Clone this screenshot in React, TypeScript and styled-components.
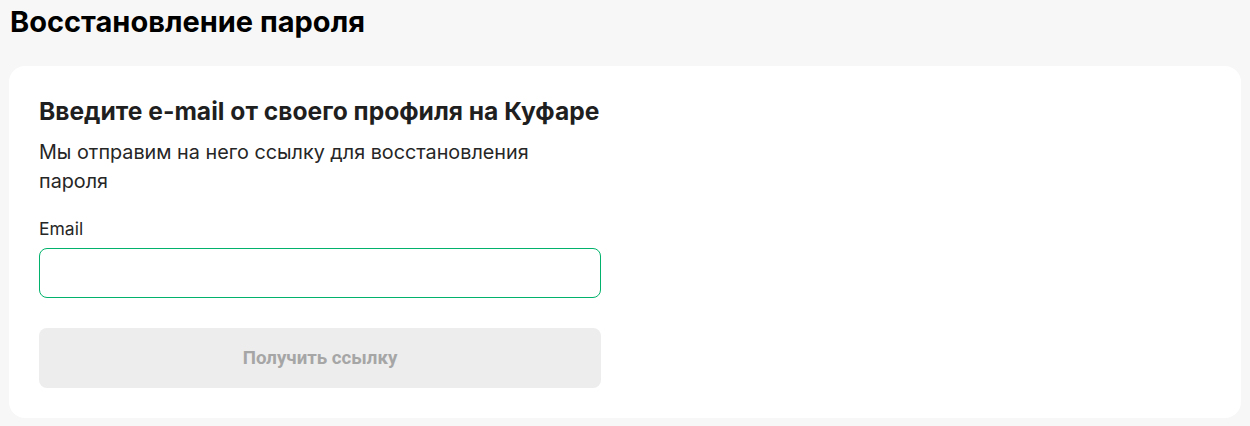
import styled, { createGlobalStyle } from "styled-components";

const GlobalStyle = createGlobalStyle`
  body {
    margin: 0;
    background: #f7f7f7;
    font-family: Inter, "Noto Sans", sans-serif;
    color: #1f1f1f;
  }
`;

const Page = styled.div`
  padding: 4px 9px 8px 9px;
`;

const PageTitle = styled.h1`
  margin: 0 0 0 1px;
  font-size: 29px;
  line-height: 36px;
  font-weight: 700;
  color: #000;
`;

const Card = styled.section`
  margin-top: 26px;
  background: #fff;
  border-radius: 16px;
  padding: 30px;
`;

const Form = styled.form`
  width: 562px;
  display: flex;
  flex-direction: column;
`;

const Heading = styled.h2`
  margin: 0;
  font-size: 24.6px;
  line-height: 30px;
  font-weight: 700;
  color: #1f1f1f;
`;

const Lead = styled.p`
  margin: 12px 0 0;
  width: 530px;
  font-size: 19.8px;
  line-height: 29px;
  color: #262626;
`;

const Label = styled.label`
  margin-top: 22px;
  font-size: 17.5px;
  line-height: 22px;
  color: #262626;
`;

const Input = styled.input`
  margin-top: 8px;
  box-sizing: border-box;
  height: 50px;
  width: 100%;
  border: 1px solid #00b26b;
  border-radius: 8px;
  padding: 0 16px;
  font-size: 16px;
  font-family: inherit;
  outline: none;
`;

const SubmitButton = styled.button`
  margin-top: 30px;
  height: 60px;
  width: 100%;
  border: 0;
  border-radius: 8px;
  background: #ededed;
  color: #a6a6a6;
  font-family: Roboto, "Liberation Sans", sans-serif;
  font-size: 18.7px;
  font-weight: 700;
  cursor: default;
`;

export default function App() {
  return (
    <>
      <GlobalStyle />
      <Page>
        <PageTitle>Восстановление пароля</PageTitle>
        <Card>
          <Form onSubmit={(e) => e.preventDefault()}>
            <Heading>Введите e-mail от своего профиля на Куфаре</Heading>
            <Lead>Мы отправим на него ссылку для восстановления пароля</Lead>
            <Label htmlFor="email">Email</Label>
            <Input id="email" type="email" />
            <SubmitButton type="submit" disabled>
              Получить ссылку
            </SubmitButton>
          </Form>
        </Card>
      </Page>
    </>
  );
}
